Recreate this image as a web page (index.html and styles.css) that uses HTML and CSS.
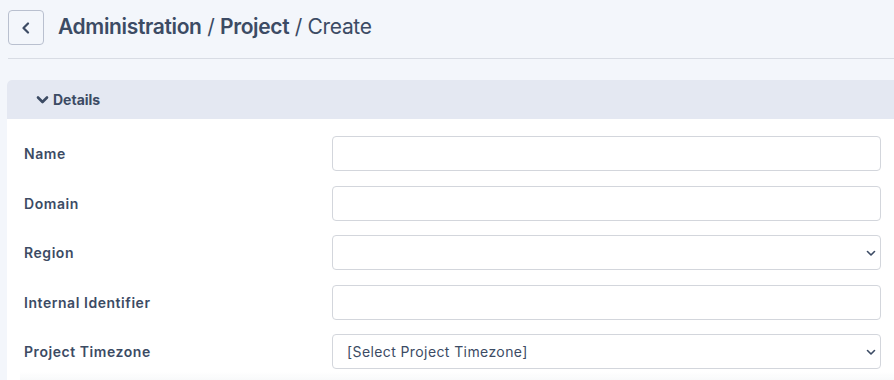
FILE: index.html
```html
<!DOCTYPE html>
<html>
  <head>
    <title>Project / Create</title>
    <meta charset="utf-8"/>
    <link rel="stylesheet" href="styles.css">
  </head>
  <body>
    <div class="page-header">
      <button class="back-btn" type="button">
        <svg width="10" height="12" viewBox="0 0 10 12"><path d="M7 1.5 L2.5 6 L7 10.5" fill="none" stroke="#3c4b64" stroke-width="2.2" stroke-linecap="round" stroke-linejoin="round"/></svg>
      </button>
      <h1 class="title"><strong>Administration</strong> / <strong>Project</strong> / Create</h1>
    </div>

    <div class="card">
      <div class="card-header">
        <svg width="13" height="10" viewBox="0 0 13 10"><path d="M2 2.5 L6.5 7 L11 2.5" fill="none" stroke="#3c4b64" stroke-width="2.6" stroke-linecap="round" stroke-linejoin="round"/></svg>
        <span>Details</span>
      </div>
      <div class="card-body">
        <div class="field">
          <label for="name">Name</label>
          <input id="name" type="text">
        </div>
        <div class="field">
          <label for="domain">Domain</label>
          <input id="domain" type="text">
        </div>
        <div class="field">
          <label for="region">Region</label>
          <div class="select-wrap">
            <select id="region"><option></option></select>
            <svg class="caret" width="10" height="7" viewBox="0 0 10 7"><path d="M1.5 1.5 L5 5 L8.5 1.5" fill="none" stroke="#3c4b64" stroke-width="1.6" stroke-linecap="round" stroke-linejoin="round"/></svg>
          </div>
        </div>
        <div class="field">
          <label for="internal">Internal Identifier</label>
          <input id="internal" type="text">
        </div>
        <div class="field">
          <label for="timezone">Project Timezone</label>
          <div class="select-wrap">
            <select id="timezone"><option>[Select Project Timezone]</option></select>
            <svg class="caret" width="10" height="7" viewBox="0 0 10 7"><path d="M1.5 1.5 L5 5 L8.5 1.5" fill="none" stroke="#3c4b64" stroke-width="1.6" stroke-linecap="round" stroke-linejoin="round"/></svg>
          </div>
        </div>
      </div>
    </div>
    <div class="footer-shade"></div>
  </body>
</html>
```

FILE: styles.css
```css
body {
  background: #f3f6fb;
  color: #3c4b64;
  font-family: Inter, "Open Sans", sans-serif;
  margin: 0;
  overflow: hidden;
}
.page-header {
  align-items: center;
  border-bottom: 1px solid #d8dce4;
  display: flex;
  gap: 14px;
  margin-left: 8px;
  padding: 10px 0 13px 0;
}
.back-btn {
  align-items: center;
  background: transparent;
  border: 1px solid #b9c0cf;
  border-radius: 4px;
  display: flex;
  height: 35px;
  justify-content: center;
  padding: 0;
  width: 36px;
}
.title {
  font-size: 21px;
  font-weight: 400;
  letter-spacing: -0.35px;
  margin: 0 0 2px 0;
}
.title strong {
  font-weight: 600;
}
.card {
  background: #fff;
  border-top-left-radius: 5px;
  margin: 21px 0 0 7px;
}
.card-header {
  align-items: center;
  background: #e4e8f2;
  border-top-left-radius: 5px;
  display: flex;
  font-size: 14px;
  font-weight: 700;
  gap: 4px;
  height: 39px;
  padding-left: 29px;
}
.card-body {
  display: flex;
  flex-direction: column;
  gap: 14.5px;
  padding: 17px 13px 20px 17px;
}
.field {
  align-items: center;
  display: grid;
  grid-template-columns: 308px 1fr;
}
.field label {
  font-size: 14px;
  font-weight: 600;
  letter-spacing: 0.55px;
}
input, select {
  background: #fff;
  border: 1px solid #d3d6dc;
  border-radius: 4px;
  box-sizing: border-box;
  color: #3c4b64;
  font-family: inherit;
  font-size: 14px;
  height: 35px;
  letter-spacing: 0.4px;
  padding: 0 14px;
  width: 100%;
}
select {
  appearance: none;
  -webkit-appearance: none;
}
.select-wrap {
  position: relative;
}
.caret {
  position: absolute;
  right: 5px;
  top: 15px;
}
.footer-shade {
  background: linear-gradient(#ffffff00, #f8f9fa);
  bottom: 0;
  height: 8px;
  left: 20px;
  position: fixed;
  right: 0;
}
```
